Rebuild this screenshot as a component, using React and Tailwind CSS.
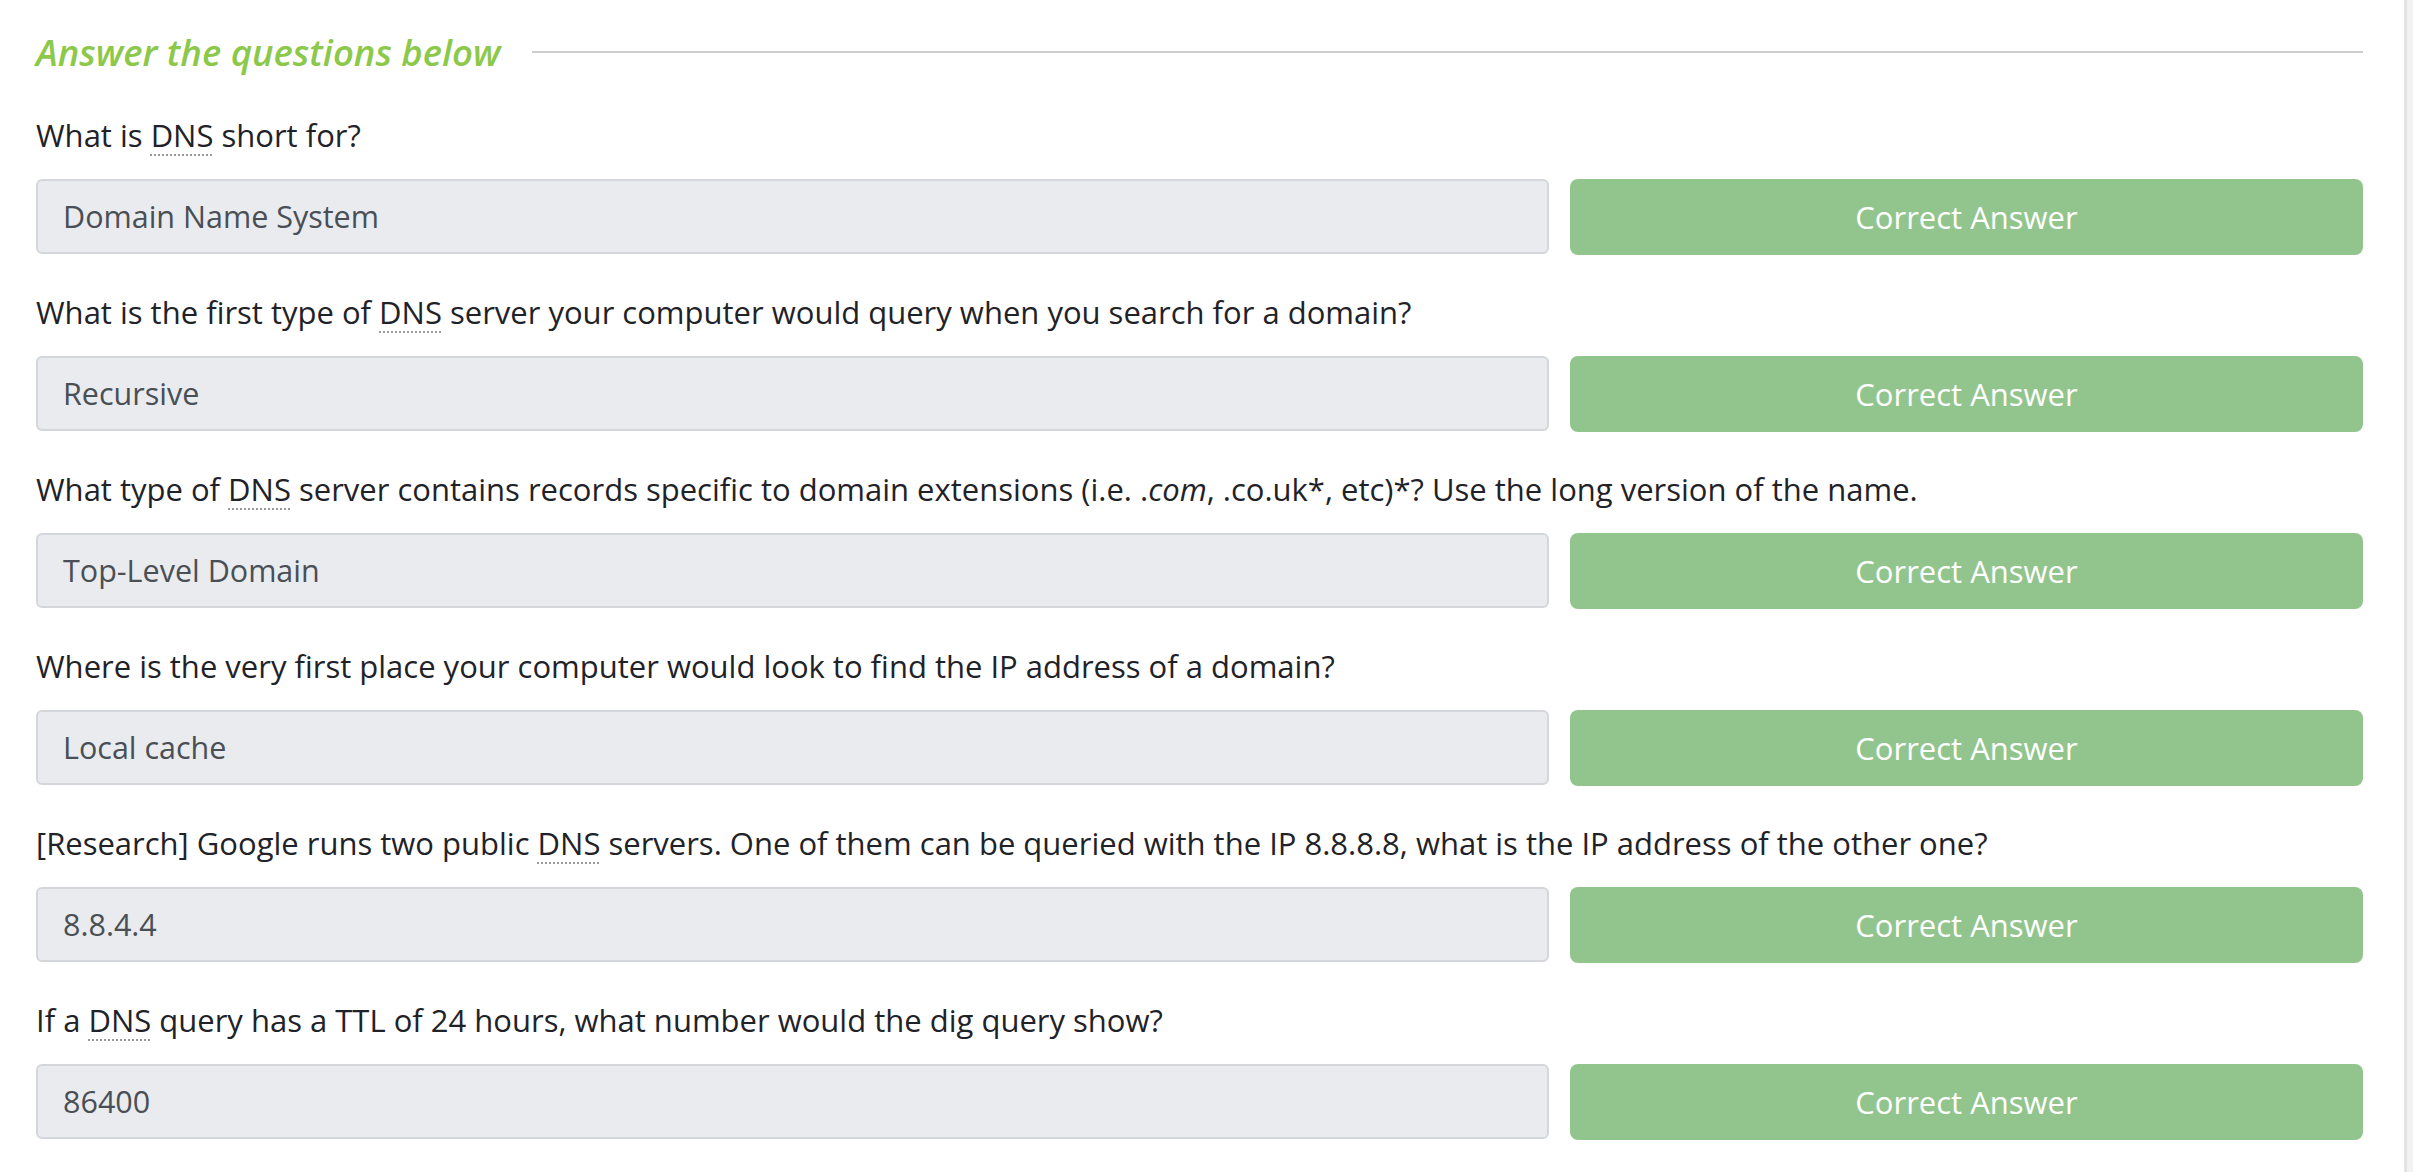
const font = { fontFamily: '"Open Sans", "Noto Sans", sans-serif' }

function Abbr({ children }) {
  return (
    <span className="underline decoration-dotted decoration-2 decoration-[#9a9a9a] underline-offset-[7px]">
      {children}
    </span>
  )
}

const questions = [
  { q: <>What is <Abbr>DNS</Abbr> short for?</>, a: 'Domain Name System' },
  {
    q: <>What is the first type of <Abbr>DNS</Abbr> server your computer would query when you search for a domain?</>,
    a: 'Recursive'
  },
  {
    q: (
      <>
        What type of <Abbr>DNS</Abbr> server contains records specific to domain extensions (i.e. .<i>com</i>, .co.uk*,
        etc)*? Use the long version of the name.
      </>
    ),
    a: 'Top-Level Domain'
  },
  { q: <>Where is the very first place your computer would look to find the IP address of a domain?</>, a: 'Local cache' },
  {
    q: (
      <>
        [Research] Google runs two public <Abbr>DNS</Abbr> servers. One of them can be queried with the IP 8.8.8.8, what is
        the IP address of the other one?
      </>
    ),
    a: '8.8.4.4'
  },
  { q: <>If a <Abbr>DNS</Abbr> query has a TTL of 24 hours, what number would the dig query show?</>, a: '86400' }
]

export default function App() {
  return (
    <div className="flex min-h-[1172px] bg-white" style={font}>
      <div className="flex-1 pl-[36px] pr-[41px] pt-[28px]">
        <div className="flex items-center gap-[32px] h-[48px]">
          <h2 className="italic font-semibold text-[36.5px] leading-[48px] text-[#8cc84a] whitespace-nowrap">
            Answer the questions below
          </h2>
          <div className="flex-1 h-[2px] bg-[#cdcdcd]" />
        </div>

        <div className="mt-[35px] flex flex-col gap-[33px]">
          {questions.map((item, i) => (
            <div key={i}>
              <div className="text-[31px] leading-[48px] text-[#1f2328] whitespace-nowrap">{item.q}</div>
              <div className="mt-[20px] flex gap-[21px]">
                <div className="flex-1 h-[75px] rounded-[6px] border-2 border-[#d3d6db] bg-[#e9ebef] flex items-center px-[25px] text-[30.5px] text-[#4a4f55]">
                  {item.a}
                </div>
                <button className="w-[793px] h-[76px] rounded-[8px] bg-[#92c58d] text-white text-[31px] flex items-center justify-center">
                  Correct Answer
                </button>
              </div>
            </div>
          ))}
        </div>
      </div>
      <div className="w-[9px] border-l-[3px] border-[#e4e4e4] bg-[#f2f2f2]" />
    </div>
  )
}
